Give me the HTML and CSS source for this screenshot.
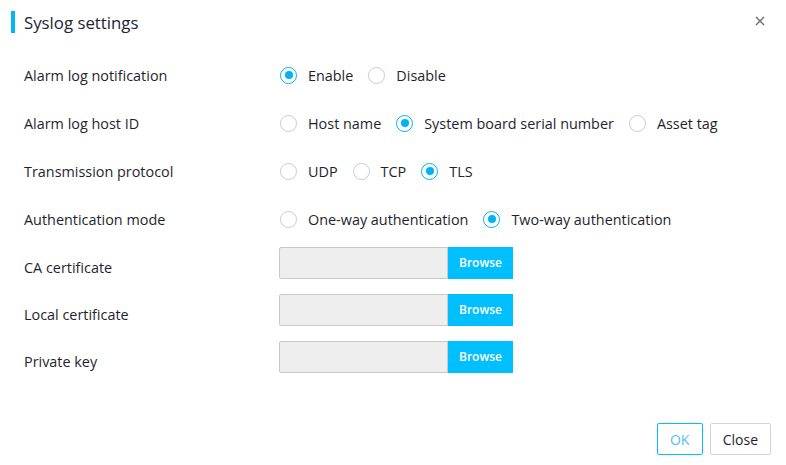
FILE: index.html
```html
<!DOCTYPE html>
<html>
<head>
<meta charset="utf-8">
<link rel="stylesheet" href="styles.css">
</head>
<body>
<div class="dialog">
  <div class="header">
    <div class="title"><span class="bar"></span>Syslog settings</div>
    <svg class="close-x" width="10" height="10" viewBox="0 0 10 10"><path d="M1 1L9 9M9 1L1 9" stroke="#666a75" stroke-width="1.4" fill="none"/></svg>
  </div>
  <div class="form">
    <div class="label">Alarm log notification</div>
    <div class="ctrl">
      <span class="opt"><span class="radio on"></span>Enable</span>
      <span class="opt"><span class="radio"></span>Disable</span>
    </div>
    <div class="label">Alarm log host ID</div>
    <div class="ctrl">
      <span class="opt"><span class="radio"></span>Host name</span>
      <span class="opt"><span class="radio on"></span>System board serial number</span>
      <span class="opt"><span class="radio"></span>Asset tag</span>
    </div>
    <div class="label">Transmission protocol</div>
    <div class="ctrl">
      <span class="opt"><span class="radio"></span>UDP</span>
      <span class="opt"><span class="radio"></span>TCP</span>
      <span class="opt"><span class="radio on"></span>TLS</span>
    </div>
    <div class="label">Authentication mode</div>
    <div class="ctrl">
      <span class="opt"><span class="radio"></span>One-way authentication</span>
      <span class="opt"><span class="radio on"></span>Two-way authentication</span>
    </div>
    <div class="label lower">CA certificate</div>
    <div class="ctrl"><div class="file"><span class="field"></span><span class="browse">Browse</span></div></div>
    <div class="label lower">Local certificate</div>
    <div class="ctrl"><div class="file"><span class="field"></span><span class="browse">Browse</span></div></div>
    <div class="label lower">Private key</div>
    <div class="ctrl"><div class="file"><span class="field"></span><span class="browse">Browse</span></div></div>
  </div>
  <div class="footer">
    <button class="btn ok">OK</button>
    <button class="btn">Close</button>
  </div>
</div>
</body>
</html>
```
FILE: styles.css
```css
html, body { margin: 0; padding: 0; background: #fff; }
body { font-family: "Open Sans", "Noto Sans", sans-serif; color: #1f1f2e; }
.dialog { width: 786px; height: 465px; display: flex; flex-direction: column; }
.header { height: 44px; display: flex; align-items: center; justify-content: space-between; padding: 0 21px 0 11px; }
.title { display: flex; align-items: center; font-size: 16.8px; color: #222433; }
.bar { width: 4px; height: 22px; background: #00b7f5; margin-right: 9px; }
.close-x { margin-top: -2px; }
.form { display: grid; grid-template-columns: 256px 1fr; grid-template-rows: 48px 48px 48px 48px 47px 47px 47px; padding: 7px 0 0 24px; align-items: center; }
.label { font-size: 14.4px; color: #1f1f2e; }
.label.lower { padding-top: 2px; }
.ctrl { display: flex; align-items: center; font-size: 14.4px; }
.opt { display: flex; align-items: center; margin-right: 15px; }
.radio { width: 17px; height: 17px; border: 1px solid #c9cbd3; border-radius: 50%; box-sizing: border-box; margin-right: 11px; position: relative; }
.radio.on { border: 1.5px solid #00b3f5; }
.radio.on::after { content: ""; position: absolute; left: 50%; top: 50%; width: 8px; height: 8px; margin: -4px 0 0 -4px; border-radius: 50%; background: #00b3f5; }
.file { display: flex; height: 32px; margin-top: -8px; margin-left: -1px; }
.field { width: 167px; border: 1px solid #c8c8cf; background: #eeeeee; border-radius: 2px 0 0 2px; }
.browse { width: 65px; background: #00bfff; color: #fff; font-size: 12px; display: flex; align-items: center; justify-content: center; font-weight: 600; }
.footer { margin-top: auto; display: flex; justify-content: flex-end; gap: 7px; padding: 0 15px 10px 0; }
.btn { height: 32px; font-family: inherit; font-size: 14px; background: #fff; border: 1px solid #d4d4d8; border-radius: 2px; padding: 0 12px; color: #1f1f2e; cursor: pointer; }
.btn.ok { border-color: #00bfff; color: #5bbcf2; width: 46px; padding: 0; }
```
